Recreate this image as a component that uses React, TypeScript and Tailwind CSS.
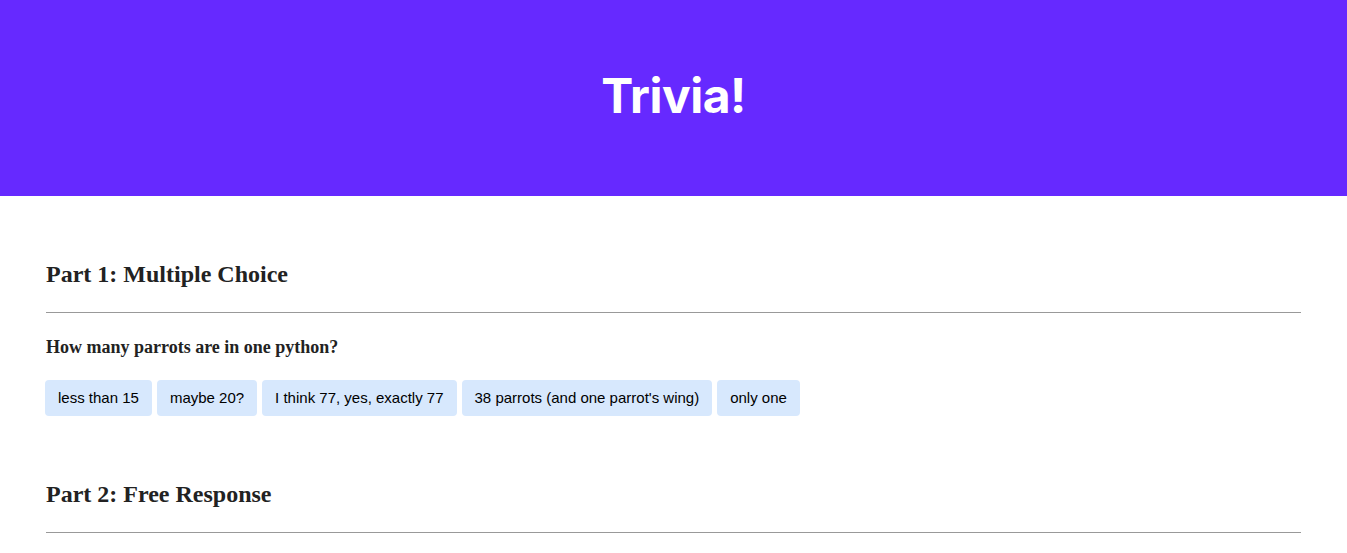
const choices = [
  "less than 15",
  "maybe 20?",
  "I think 77, yes, exactly 77",
  "38 parrots (and one parrot's wing)",
  "only one",
];

export default function App() {
  return (
    <div className="min-h-screen bg-white">
      <header className="h-[196px] bg-[#6629ff] flex items-center justify-center pb-[4px]">
        <h1 className="text-white text-[48px] font-bold tracking-[-0.5px] font-['Inter',sans-serif] leading-none">
          Trivia!
        </h1>
      </header>

      <main className="px-[46px] font-['Liberation_Serif',serif] text-[#222]">
        <section className="pt-[64px]">
          <h2 className="text-[24px] font-bold leading-[28px]">Part 1: Multiple Choice</h2>
          <hr className="mt-[24px] border-t border-[#999]" />
          <h3 className="mt-[23px] text-[18px] font-bold leading-[22px]">
            How many parrots are in one python?
          </h3>
          <div className="mt-[22px] -ml-px flex flex-wrap gap-[5px] font-['Liberation_Sans',sans-serif]">
            {choices.map((c) => (
              <button
                key={c}
                className="h-[36px] px-[13px] rounded-[4px] bg-[#d7e8fd] text-[15px] text-black"
              >
                {c}
              </button>
            ))}
          </div>
        </section>

        <section className="pt-[64px]">
          <h2 className="text-[24px] font-bold leading-[28px]">Part 2: Free Response</h2>
          <hr className="mt-[24px] border-t border-[#999]" />
        </section>
      </main>
    </div>
  );
}
